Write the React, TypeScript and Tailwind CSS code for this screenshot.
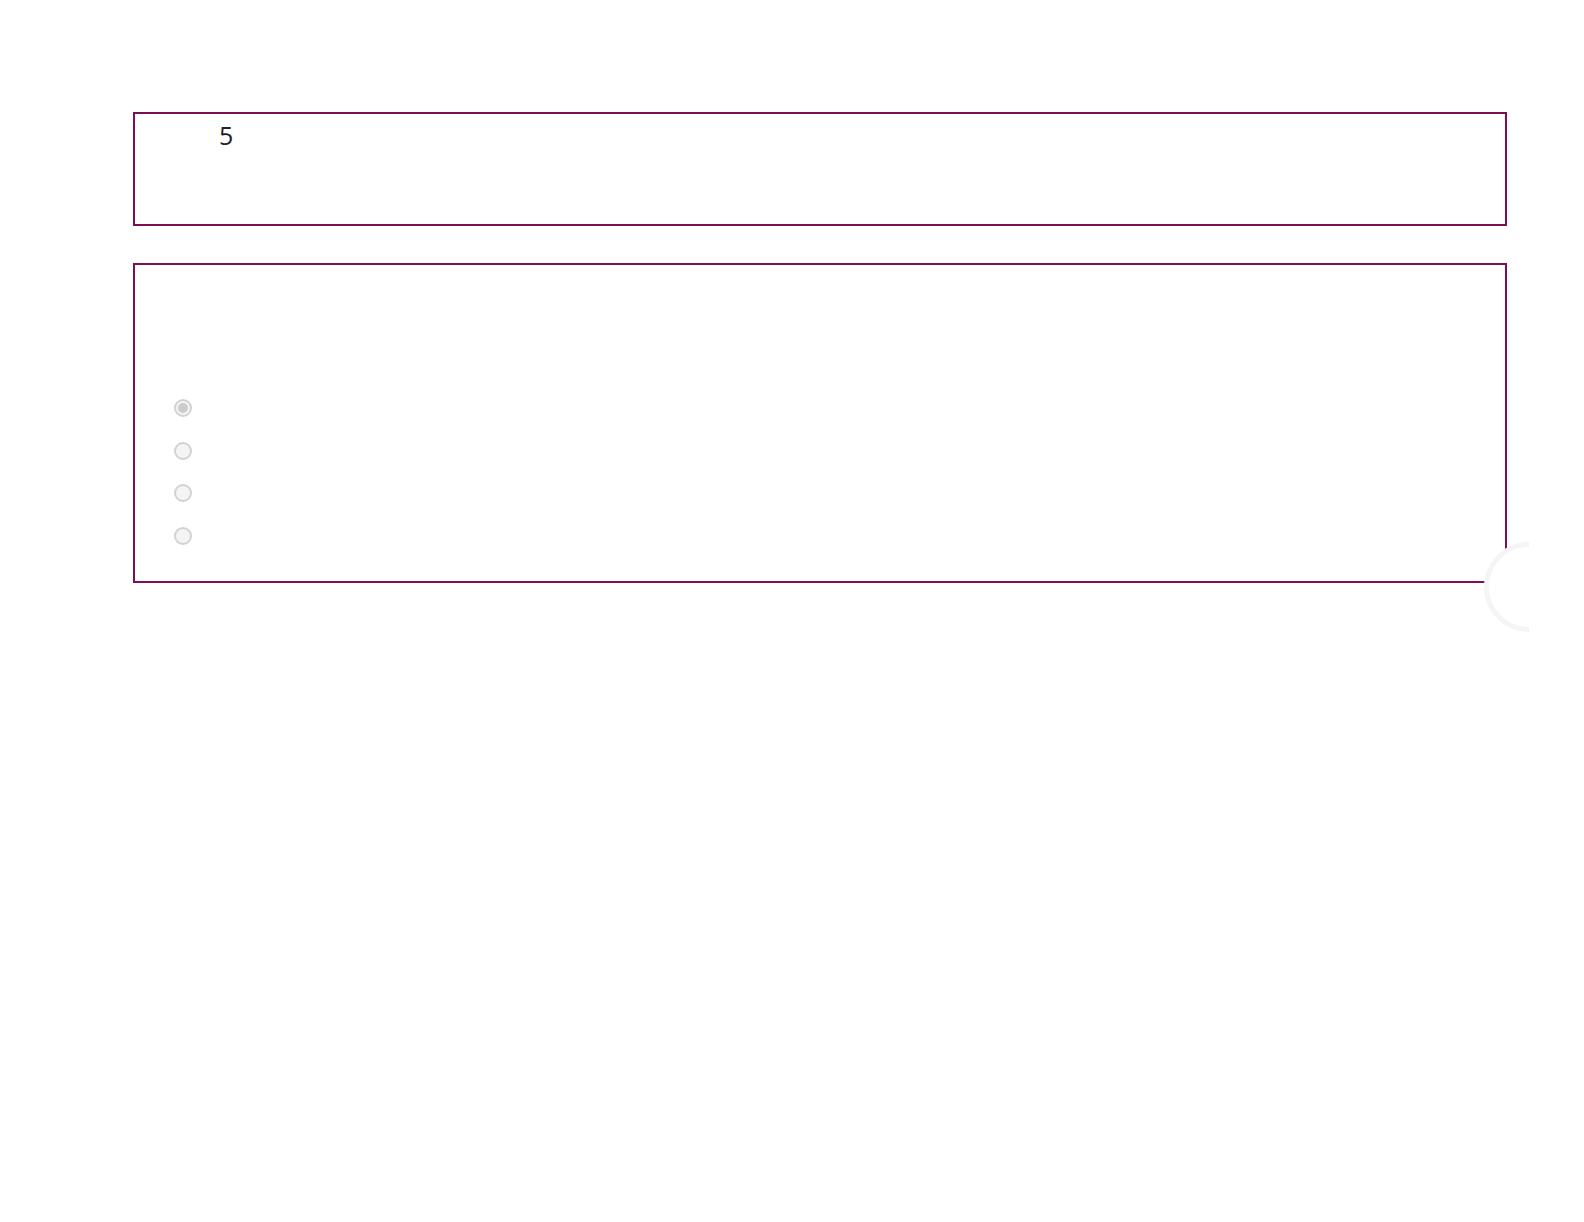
import React from 'react';

const options = [
  { id: 'a', checked: true },
  { id: 'b', checked: false },
  { id: 'c', checked: false },
  { id: 'd', checked: false },
];

export default function App() {
  return (
    <div className="relative min-h-[1222px] w-full bg-white font-['Open_Sans',sans-serif] text-[#333]">
      <div className="pt-[112px] pl-[133px]">
        {/* Question number */}
        <div className="h-[114px] w-[1374px] border-2 border-[#7f0f55] pt-[3px] pl-[84px]">
          <span className="text-[25px] leading-[1.5] text-[#222]">5</span>
        </div>

        {/* Answer box */}
        <div className="mt-[37px] h-[320px] w-[1374px] border-2 border-[#7f0f55] pt-[122px] pl-[39px]">
          <div className="flex flex-col">
            {options.map((opt) => (
              <div key={opt.id} className="flex h-[42.5px] items-center">
                <div className="flex h-[18px] w-[18px] items-center justify-center rounded-full border-2 border-[#d2d2d2] bg-[#f4f4f4]">
                  {opt.checked && <div className="h-[10px] w-[10px] rounded-full bg-[#cccccc]" />}
                </div>
              </div>
            ))}
          </div>
        </div>
      </div>

      {/* Loading spinner, half hidden at the edge */}
      <div className="absolute left-[1484px] top-[542px] h-[90px] w-[45px] overflow-hidden">
        <div className="h-[90px] w-[90px] rounded-full border-[5px] border-[#f5f5f5] bg-white" />
      </div>
    </div>
  );
}
